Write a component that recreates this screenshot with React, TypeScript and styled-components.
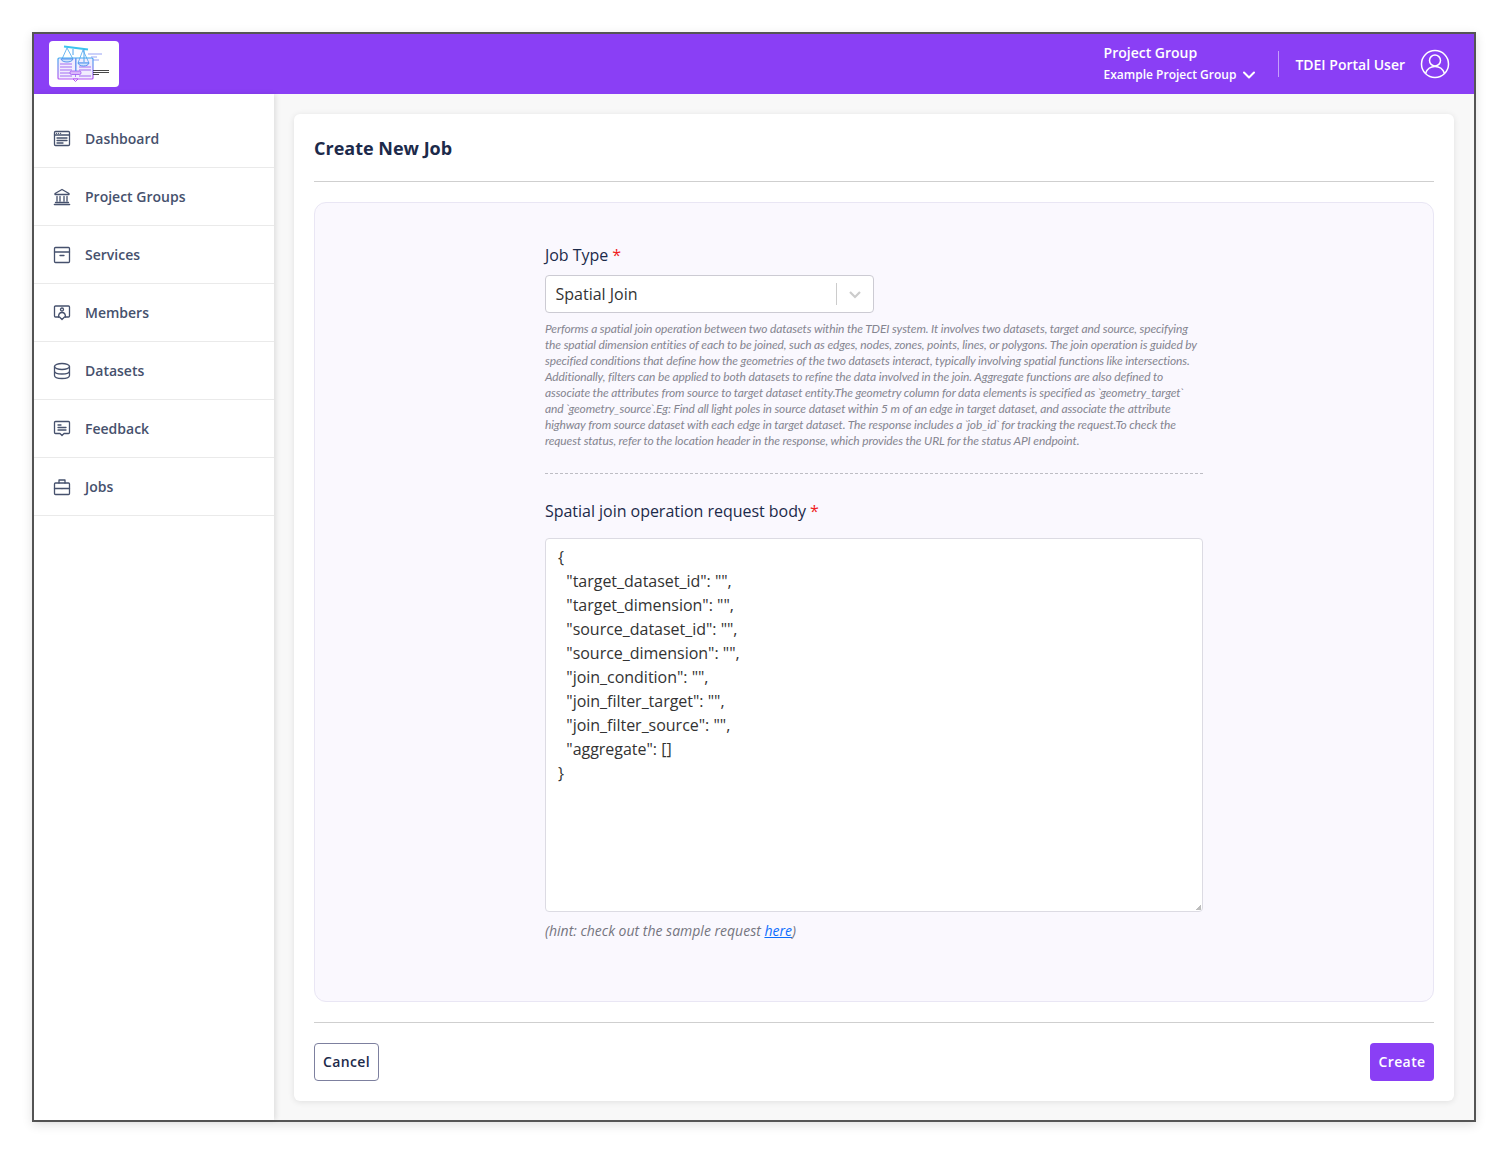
import React from "react";
import styled, { createGlobalStyle } from "styled-components";

const Global = createGlobalStyle`
  html, body { margin: 0; padding: 0; background: #fff; }
  * { box-sizing: border-box; }
  body { font-family: "Open Sans", "Noto Sans", sans-serif; color: #1c2a4a; }
`;

const Page = styled.div`
  width: 1508px;
  height: 1154px;
  padding: 32px;
`;
const Frame = styled.div`
  width: 1444px;
  height: 1090px;
  border: 2px solid #555;
  display: flex;
  flex-direction: column;
  background: #f8f8f8;
  box-shadow: 0 3px 10px rgba(0, 0, 0, 0.12);
`;
const Header = styled.header`
  height: 60px;
  flex: none;
  background: #8a3ff5;
  display: flex;
  align-items: center;
  padding: 0 24px 0 15px;
  color: #fff;
`;
const LogoBox = styled.div`
  width: 70px;
  height: 46px;
  background: #fff;
  border-radius: 4px;
  display: flex;
`;
const HeaderRight = styled.div`
  margin-left: auto;
  display: flex;
  align-items: center;
`;
const GroupBlock = styled.div`
  display: flex;
  flex-direction: column;
  gap: 5px;
  padding: 0 23px 2px 0;
  border-right: 1px solid rgba(255, 255, 255, 0.5);
  height: 26px;
  justify-content: center;
  margin-right: 16px;
`;
const GroupLabel = styled.div`
  font-size: 14px;
  font-weight: 600;
  line-height: 19px;
`;
const GroupValue = styled.div`
  font-size: 12px;
  font-weight: 600;
  line-height: 16px;
  display: flex;
  align-items: center;
  gap: 7px;
`;
const UserName = styled.div`
  font-size: 14px;
  font-weight: 600;
  margin-right: 15px;
`;
const Body = styled.div`
  flex: 1;
  display: flex;
  min-height: 0;
`;
const Sidebar = styled.nav`
  width: 240px;
  flex: none;
  background: #fff;
  padding-top: 16px;
  box-shadow: 2px 0 5px rgba(0, 0, 0, 0.1);
`;
const NavItem = styled.a`
  height: 58px;
  display: flex;
  align-items: center;
  gap: 14px;
  padding-left: 19px;
  border-bottom: 1px solid #eaeaea;
  color: #46516d;
  font-size: 14px;
  font-weight: 600;
  text-decoration: none;
`;
const Main = styled.main`
  flex: 1;
  padding: 20px 20px 19px 20px;
  display: flex;
`;
const Card = styled.section`
  flex: 1;
  background: #fff;
  border-radius: 6px;
  box-shadow: 0 1px 6px rgba(0, 0, 0, 0.1);
  padding: 20px;
  display: flex;
  flex-direction: column;
`;
const Title = styled.h1`
  margin: 0;
  height: 49px;
  font-size: 18px;
  line-height: 29px;
  font-weight: 700;
  color: #1c2a4a;
  border-bottom: 1px solid #cfcfcf;
`;
const Panel = styled.div`
  margin-top: 20px;
  height: 800px;
  flex: none;
  background: #faf8fe;
  border: 1px solid #e9e6f4;
  border-radius: 12px;
  display: flex;
  justify-content: center;
  padding-top: 40px;
`;
const Form = styled.div`
  width: 658px;
`;
const Label = styled.div`
  font-size: 16px;
  line-height: 24px;
  color: #1c2a4a;
  margin-bottom: 8px;
  letter-spacing: -0.03px;
`;
const Req = styled.span`
  color: #f01c1c;
`;
const SelectBox = styled.div`
  width: 329px;
  height: 38px;
  background: #fff;
  border: 1px solid #cccbd3;
  border-radius: 4px;
  display: flex;
  align-items: center;
  font-size: 16px;
  color: #333;
  padding-left: 10px;
`;
const SelectText = styled.div`
  flex: 1;
  margin-left: -0.5px;
`;
const SelectSep = styled.span`
  width: 1px;
  height: 22px;
  background: #ccc;
`;
const SelectArrow = styled.span`
  width: 36px;
  display: flex;
  justify-content: center;
  color: #ccc;
`;
const Description = styled.p`
  margin: 8px 0 0 0;
  font-family: "Lato", sans-serif;
  font-style: italic;
  font-size: 12px;
  line-height: 16px;
  color: #858590;
  letter-spacing: -0.13px;
  padding-bottom: 24px;
  border-bottom: 1px dashed #bdbdc4;
  width: 658px;
  white-space: nowrap;
`;
const Tick = styled.span`
  margin: 0 -1px;
`;
const BodyLabel = styled(Label)`
  margin: 25px 0 15px;
`;
const TextArea = styled.textarea`
  display: block;
  width: 658px;
  height: 374px;
  background: #fff;
  border: 1px solid #dcdbe3;
  border-radius: 4px;
  padding: 6px 12px;
  font-family: "Open Sans", sans-serif;
  font-size: 16px;
  line-height: 24px;
  color: #333;
  outline: none;
  letter-spacing: -0.02px;
  &::-webkit-resizer {
    background: linear-gradient(135deg, transparent 50%, #bdbdbd 50%) no-repeat right 1px bottom 1px / 6px 6px;
  }
`;
const Hint = styled.div`
  margin-top: 9px;
  font-style: italic;
  font-size: 14px;
  line-height: 20px;
  color: #75757f;
  a { color: #0d6efd; text-decoration: underline; }
`;
const Footer = styled.footer`
  margin-top: 20px;
  border-top: 1px solid #cfcfcf;
  padding-top: 20px;
  display: flex;
  justify-content: space-between;
`;
const CancelButton = styled.button`
  height: 38px;
  width: 65px;
  background: #fff;
  border: 1px solid #7d809f;
  border-radius: 4px;
  font-family: inherit;
  font-size: 14px;
  font-weight: 600;
  color: #1c2a4a;
  letter-spacing: 0.4px;
  padding: 0 0 2px;
`;
const CreateButton = styled.button`
  height: 38px;
  width: 64px;
  background: #8a3ff5;
  border: 0;
  border-radius: 4px;
  font-family: inherit;
  font-size: 14px;
  font-weight: 600;
  color: #fff;
  letter-spacing: 0.4px;
  padding: 0 0 2px;
`;

const Icon: React.FC<{ children: React.ReactNode }> = ({ children }) => (
  <svg width="18" height="18" viewBox="0 0 18 18" fill="none" stroke="#46516d" strokeWidth="1.3" strokeLinecap="round" strokeLinejoin="round">
    {children}
  </svg>
);

const items: [string, React.ReactNode][] = [
  ["Dashboard", <><rect x="1.5" y="1.5" width="15" height="14" rx="1" /><path d="M1.5 5h15M4 8h10M4 10.5h10M4 13h6" /><path d="M3.5 3.3h.1M5.500 3.300h.1M7.500 3.300h.1" /></>],
  ["Project Groups", <><path d="M2 6.500h14v-1L9 1.500 2 5.500zM4 8.500v4.500M7 8.500v4.500M11 8.500v4.500M14 8.500v4.500M2.500 14.500h13" /><path d="M1.500 16.500h15" strokeWidth="1.600" /></>],
  ["Services", <><rect x="1.500" y="1.500" width="15" height="15" rx="1" /><path d="M1.500 6h15M7 9.500h4" /></>],
  ["Members", <><path d="M2.500 2h13a1 1 0 0 1 1 1v9a1 1 0 0 1-1 1h-4L9 15.500 6.500 13h-4a1 1 0 0 1-1-1V3a1 1 0 0 1 1-1z" /><circle cx="9" cy="5.500" r="1.500" /><path d="M5.500 13c0-3 1.200-4.500 3.500-4.500s3.500 1.500 3.500 4.500" /></>],
  ["Datasets", <><ellipse cx="9" cy="4.500" rx="7.500" ry="3" /><path d="M1.500 4.500v9c0 1.700 3.400 3 7.500 3s7.500-1.300 7.500-3v-9M1.500 9c0 1.700 3.400 3 7.500 3s7.500-1.300 7.500-3" /></>],
  ["Feedback", <><path d="M2.500 1.500h13a1 1 0 0 1 1 1v10a1 1 0 0 1-1 1h-4.500L9 15.500l-2-2H2.500a1 1 0 0 1-1-1v-10a1 1 0 0 1 1-1z" /><path d="M5 5h3M5 7.500h8M5 10h8" /></>],
  ["Jobs", <><rect x="1.500" y="5" width="15" height="11.500" rx="1" /><path d="M6 5V2h6v3M1.500 10.500h15M9 10.300v.5" /></>],
];

const Logo = () => (
  <svg width="70" height="46" viewBox="0 0 70 46" fill="none">
    <defs>
      <linearGradient id="bookGrad" x1="0" y1="0" x2="0" y2="1">
        <stop offset="0" stopColor="#3fa9ee" />
        <stop offset="1" stopColor="#b657f3" />
      </linearGradient>
    </defs>
    <rect x="9" y="17" width="35" height="21" rx="1" fill="#f1ecfe" stroke="url(#bookGrad)" strokeWidth="1.200" />
    <path d="M26.500 17v19" stroke="#a784f3" strokeWidth="1" />
    <path d="M11 23h12M11 26h12M11 29h12M11 32h12M11 35h12M30 26h12M30 29h12M30 35h12" stroke="#a36cf2" strokeWidth="1" />
    <rect x="21" y="30" width="11" height="3.500" rx="1.500" fill="#d9b7fa" stroke="#a055f2" strokeWidth=".8" />
    <path d="M24 38h5l-2.500 2.500z" fill="#fff" stroke="#b657f3" strokeWidth="1" />
    <path d="M15 5.500l24 3" stroke="#3cc4ee" strokeWidth="2" />
    <path d="M24 8v6M35 8v13M27 30V17" stroke="#4ea4ee" strokeWidth="1" />
    <path d="M18 7l-5 11h11zM34 9l-5 13h11z" stroke="#49a4ee" strokeWidth=".8" />
    <path d="M12 18c1 4 11 4 12 0zM29 22c1 4 10 4 11 0z" fill="#cfe5fb" stroke="#5792f0" strokeWidth="1" />
    <path d="M39 13h14M42 16h6M44 19h6" stroke="#7f8cf3" strokeWidth=".8" />
    <path d="M44 29.500h16M44 31.500h16M44 33.500h6" stroke="#333" strokeWidth=".9" />
  </svg>
);

export default function App() {
  const json = `{
  "target_dataset_id": "",
  "target_dimension": "",
  "source_dataset_id": "",
  "source_dimension": "",
  "join_condition": "",
  "join_filter_target": "",
  "join_filter_source": "",
  "aggregate": []
}`;
  return (
    <Page>
      <Global />
      <Frame>
        <Header>
          <LogoBox><Logo /></LogoBox>
          <HeaderRight>
            <GroupBlock>
              <GroupLabel>Project Group</GroupLabel>
              <GroupValue>
                Example Project Group
                <svg width="12" height="8" viewBox="0 0 12 8" fill="none" stroke="#fff" strokeWidth="2" strokeLinecap="round" strokeLinejoin="round"><path d="M1 1.500l5 5 5-5" /></svg>
              </GroupValue>
            </GroupBlock>
            <UserName>TDEI Portal User</UserName>
            <svg width="30" height="30" viewBox="0 0 30 30" fill="none" stroke="#fff" strokeWidth="1.500">
              <circle cx="15" cy="15" r="13.500" />
              <circle cx="15" cy="11.500" r="5.500" />
              <path d="M5.500 24.500c1.500-4.500 5-7 9.500-7s8 2.500 9.500 7" />
            </svg>
          </HeaderRight>
        </Header>
        <Body>
          <Sidebar>
            {items.map(([label, icon]) => (
              <NavItem key={label} href="#">
                <Icon>{icon}</Icon>
                {label}
              </NavItem>
            ))}
          </Sidebar>
          <Main>
            <Card>
              <Title>Create New Job</Title>
              <Panel>
                <Form>
                  <Label>Job Type <Req>*</Req></Label>
                  <SelectBox>
                    <SelectText>Spatial Join</SelectText>
                    <SelectSep />
                    <SelectArrow>
                      <svg width="14" height="9" viewBox="0 0 14 9" fill="none" stroke="#ccc" strokeWidth="2.200"><path d="M2 2l5 5 5-5" /></svg>
                    </SelectArrow>
                  </SelectBox>
                  <Description>
                    Performs a spatial join operation between two datasets within the TDEI system. It involves two datasets, target and source, specifying<br />
                    the spatial dimension entities of each to be joined, such as edges, nodes, zones, points, lines, or polygons. The join operation is guided by<br />
                    specified conditions that define how the geometries of the two datasets interact, typically involving spatial functions like intersections.<br />
                    Additionally, filters can be applied to both datasets to refine the data involved in the join. Aggregate functions are also defined to<br />
                    associate the attributes from source to target dataset entity.The geometry column for data elements is specified as <Tick>`</Tick>geometry_target<Tick>`</Tick><br />
                    and <Tick>`</Tick>geometry_source<Tick>`</Tick>.Eg: Find all light poles in source dataset within 5 m of an edge in target dataset, and associate the attribute<br />
                    highway from source dataset with each edge in target dataset. The response includes a <Tick>`</Tick>job_id<Tick>`</Tick> for tracking the request.To check the<br />
                    request status, refer to the location header in the response, which provides the URL for the status API endpoint.
                  </Description>
                  <BodyLabel>Spatial join operation request body <Req>*</Req></BodyLabel>
                  <TextArea defaultValue={json} spellCheck={false} />
                  <Hint>(hint: check out the sample request <a href="#">here</a>)</Hint>
                </Form>
              </Panel>
              <Footer>
                <CancelButton>Cancel</CancelButton>
                <CreateButton>Create</CreateButton>
              </Footer>
            </Card>
          </Main>
        </Body>
      </Frame>
    </Page>
  );
}
